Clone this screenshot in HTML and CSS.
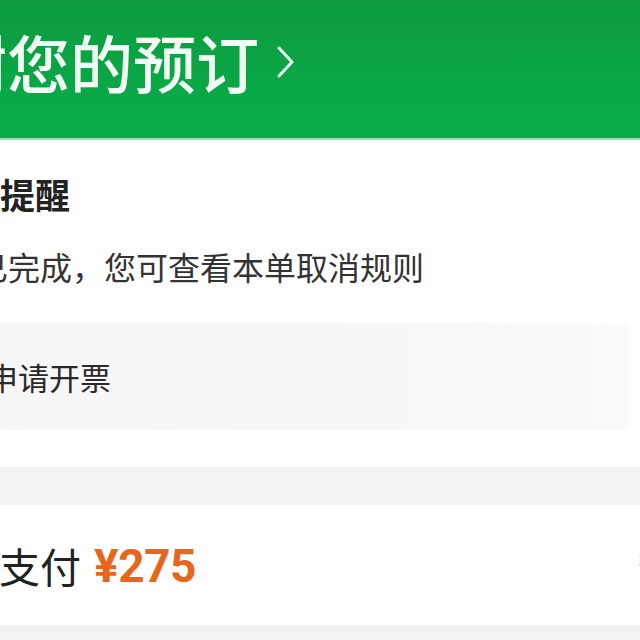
FILE: index.html
```html
<!DOCTYPE html>
<html lang="zh-CN">
<head>
<meta charset="utf-8">
<title>预订详情</title>
<link rel="stylesheet" href="styles.css">
</head>
<body>
<div class="page">
  <header class="hero">
    <h1 class="hero-title">
      <span class="hero-text">感谢您的预订</span>
      <svg class="hero-chevron" width="18" height="34" viewBox="0 0 18 34" aria-hidden="true">
        <polyline points="3,3 16,17 3,31" fill="none" stroke="#e9fbef" stroke-width="3" stroke-linecap="round" stroke-linejoin="round"/>
      </svg>
    </h1>
  </header>

  <section class="notice">
    <h2 class="notice-title">温馨提醒</h2>
    <p class="notice-text">取消已完成，您可查看本单取消规则</p>
    <div class="invoice-box">
      <span class="invoice-text">申请开票</span>
    </div>
  </section>

  <div class="gap"></div>

  <section class="pay">
    <div class="pay-left">
      <span class="pay-label">在线支付</span>
      <span class="pay-price">¥275</span>
    </div>
    <span class="pay-action">查看</span>
  </section>

  <div class="gap gap-bottom"></div>
</div>
</body>
</html>
```
FILE: styles.css
```css
html, body {
  margin: 0;
  padding: 0;
  background: #ffffff;
}

body {
  width: 640px;
  height: 640px;
  overflow: hidden;
  font-family: "Noto Sans CJK SC", "Noto Sans", sans-serif;
  color: #222222;
}

.page {
  width: 640px;
  display: flex;
  flex-direction: column;
}

.hero {
  height: 138px;
  background: linear-gradient(180deg, #0e9a3e 0%, #0aa646 55%, #08ac49 100%);
  border-bottom: 2px solid #8fe6aa;
  display: flex;
  align-items: flex-start;
  overflow: hidden;
}

.hero-title {
  margin: 16px 0 0 -119px;
  display: flex;
  align-items: center;
  gap: 17px;
  font-size: 63px;
  font-weight: 500;
  line-height: 90px;
  color: #f1fdf4;
  white-space: nowrap;
}

.hero-chevron {
  margin-top: 2px;
}

.notice {
  display: flex;
  flex-direction: column;
  padding: 32px 10px 37px 0;
}

.notice-title {
  margin: 0 0 0 -70px;
  font-size: 35px;
  font-weight: 700;
  line-height: 44px;
  color: #222222;
  white-space: nowrap;
}

.notice-text {
  margin: 30px 0 0 -88px;
  font-size: 32px;
  font-weight: 400;
  line-height: 40px;
  color: #333333;
  white-space: nowrap;
}

.invoice-box {
  margin-top: 37px;
  height: 107px;
  background: linear-gradient(90deg, #f7f7f7 0%, #f8f8f8 60%, #fbfbfb 100%);
  border-radius: 0 6px 6px 0;
  display: flex;
  align-items: center;
}

.invoice-text {
  margin-left: -13px;
  font-size: 31px;
  line-height: 40px;
  color: #2a2a2a;
  white-space: nowrap;
}

.gap {
  height: 38px;
  background: #f2f2f2;
}

.gap-bottom {
  height: 15px;
}

.pay {
  height: 120px;
  background: #ffffff;
  display: flex;
  align-items: center;
  justify-content: space-between;
  overflow: hidden;
}

.pay-left {
  display: flex;
  align-items: center;
  gap: 13px;
  margin-left: -83px;
  white-space: nowrap;
}

.pay-label {
  font-size: 41px;
  line-height: 50px;
  color: #222222;
}

.pay-price {
  font-family: Roboto, "Noto Sans", sans-serif;
  font-size: 46px;
  font-weight: 700;
  line-height: 50px;
  color: #e8651c;
  letter-spacing: -0.5px;
  margin-top: 2px;
}

.pay-action {
  margin-right: -66px;
  font-size: 34px;
  line-height: 40px;
  color: #2aa86a;
  white-space: nowrap;
}
```
